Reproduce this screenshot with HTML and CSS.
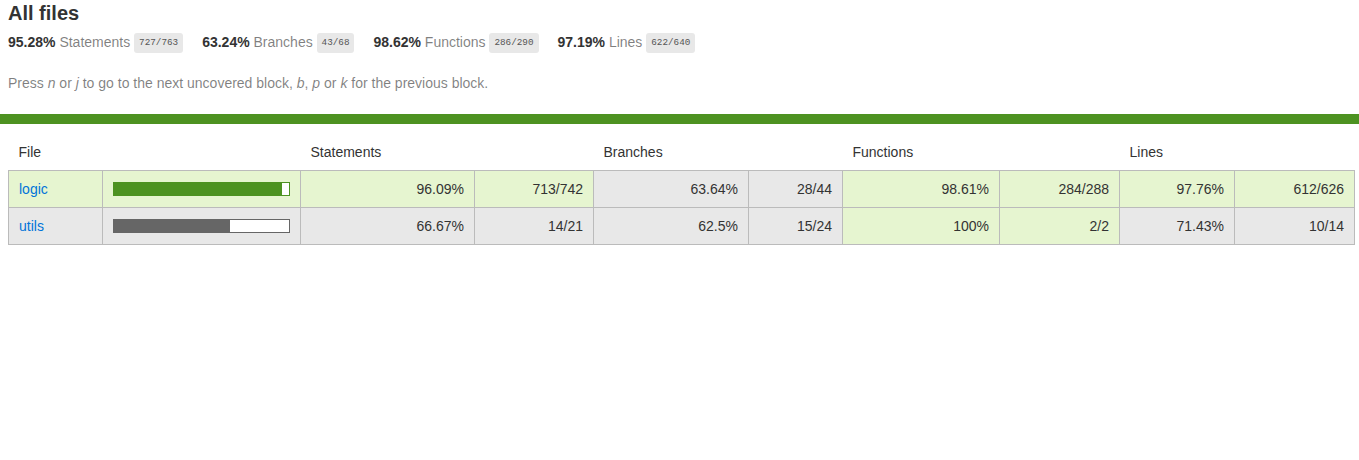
FILE: index.html
```html
<!DOCTYPE html>
<html lang="en">
<head>
<meta charset="utf-8">
<title>Code coverage report for All files</title>
<link rel="stylesheet" href="styles.css">
</head>
<body>
<div class="wrapper">
  <div class="top">
    <h1>All files</h1>
    <div class="summary">
      <div class="metric"><span class="strong">95.28% </span><span class="quiet">Statements</span> <span class="fraction">727/763</span></div>
      <div class="metric"><span class="strong">63.24% </span><span class="quiet">Branches</span> <span class="fraction">43/68</span></div>
      <div class="metric"><span class="strong">98.62% </span><span class="quiet">Functions</span> <span class="fraction">286/290</span></div>
      <div class="metric"><span class="strong">97.19% </span><span class="quiet">Lines</span> <span class="fraction">622/640</span></div>
    </div>
    <p class="quiet hint">Press <em>n</em> or <em>j</em> to go to the next uncovered block, <em>b</em>, <em>p</em> or <em>k</em> for the previous block.</p>
  </div>
  <div class="status-line high"></div>
  <div class="table-pad">
    <table class="coverage-summary">
      <colgroup>
        <col class="w-file"><col class="w-pic"><col class="w-spct"><col class="w-sabs"><col class="w-bpct"><col class="w-babs"><col class="w-fpct"><col class="w-fabs"><col class="w-lpct"><col class="w-labs">
      </colgroup>
      <thead>
        <tr>
          <th class="file">File</th>
          <th class="pic"></th>
          <th class="pct">Statements</th>
          <th class="abs"></th>
          <th class="pct">Branches</th>
          <th class="abs"></th>
          <th class="pct">Functions</th>
          <th class="abs"></th>
          <th class="pct">Lines</th>
          <th class="abs"></th>
        </tr>
      </thead>
      <tbody>
        <tr>
          <td class="file high"><a href="#">logic</a></td>
          <td class="pic high"><div class="chart"><div class="cover-fill" style="width: 96%"></div><div class="cover-empty" style="width: 4%"></div></div></td>
          <td class="pct high">96.09%</td>
          <td class="abs high">713/742</td>
          <td class="pct low">63.64%</td>
          <td class="abs low">28/44</td>
          <td class="pct high">98.61%</td>
          <td class="abs high">284/288</td>
          <td class="pct high">97.76%</td>
          <td class="abs high">612/626</td>
        </tr>
        <tr>
          <td class="file low"><a href="#">utils</a></td>
          <td class="pic low"><div class="chart"><div class="cover-fill" style="width: 66%"></div><div class="cover-empty" style="width: 34%"></div></div></td>
          <td class="pct low">66.67%</td>
          <td class="abs low">14/21</td>
          <td class="pct low">62.5%</td>
          <td class="abs low">15/24</td>
          <td class="pct high">100%</td>
          <td class="abs high">2/2</td>
          <td class="pct low">71.43%</td>
          <td class="abs low">10/14</td>
        </tr>
      </tbody>
    </table>
  </div>
</div>
</body>
</html>
```
FILE: styles.css
```css
html, body {
  margin: 0;
  padding: 0;
}
body {
  font-family: "Liberation Sans", Arial, Helvetica, sans-serif;
  font-size: 14px;
  line-height: 16px;
  color: #333;
  background: #fff;
}
.top {
  padding: 2px 8px 0 8px;
}
h1 {
  font-size: 20px;
  line-height: 23px;
  font-weight: bold;
  margin: 0;
}
.summary {
  display: flex;
  align-items: center;
  margin-top: 8px;
  height: 20px;
}
.metric {
  padding-right: 15px;
  white-space: pre;
}
.metric:last-child {
  padding-right: 0;
}
.metric + .metric {
  margin-left: 4px;
}
.strong {
  font-weight: bold;
}
.quiet {
  color: rgba(0, 0, 0, 0.5);
}
.fraction {
  font-family: "Liberation Mono", "DejaVu Sans Mono", monospace;
  font-size: 9.3px;
  line-height: 12px;
  color: #555;
  background: #e8e8e8;
  padding: 4px 5px;
  border-radius: 3px;
  vertical-align: middle;
  display: inline-block;
}
.hint {
  margin: 22px 0 0 0;
}
.hint em {
  font-style: italic;
}
.status-line {
  height: 10px;
  margin-top: 23px;
}
.status-line.high {
  background: #4d9221;
}
.table-pad {
  padding: 10px 5px 0 8px;
}
.coverage-summary {
  border-collapse: collapse;
  table-layout: fixed;
  width: 1346px;
}
.w-file { width: 94px; }
.w-pic { width: 198px; }
.w-spct { width: 174px; }
.w-sabs { width: 119px; }
.w-bpct { width: 155px; }
.w-babs { width: 94px; }
.w-fpct { width: 157px; }
.w-fabs { width: 120px; }
.w-lpct { width: 115px; }
.w-labs { width: 120px; }
.coverage-summary th,
.coverage-summary td {
  padding: 10px;
  vertical-align: middle;
}
.coverage-summary th {
  text-align: left;
  font-weight: normal;
  white-space: nowrap;
}
.coverage-summary tbody {
  border: 1px solid #bbb;
}
.coverage-summary tbody tr {
  border-bottom: 1px solid #bbb;
}
.coverage-summary td {
  border-right: 1px solid #bbb;
  white-space: nowrap;
}
.coverage-summary td:last-child {
  border-right: none;
}
.coverage-summary td.pct,
.coverage-summary td.abs {
  text-align: right;
}
td.high {
  background: #e6f5d0;
}
td.low {
  background: #e8e8e8;
}
a {
  color: #0074d9;
  text-decoration: none;
}
.chart {
  line-height: 0;
  display: flex;
  height: 12px;
}
.high .chart {
  border: 1px solid #4d9221;
}
.low .chart {
  border: 1px solid #666;
}
.cover-fill,
.cover-empty {
  height: 12px;
}
.high .cover-fill {
  background: #4d9221;
}
.low .cover-fill {
  background: #666;
}
.cover-empty {
  background: #fff;
}
```
